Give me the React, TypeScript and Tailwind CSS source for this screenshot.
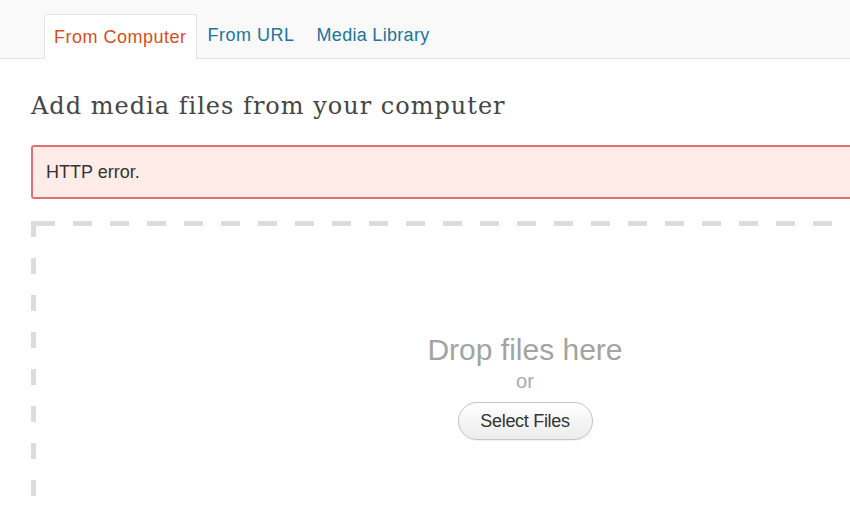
export default function App() {
  return (
    <div className="relative h-[508px] w-[850px] overflow-hidden bg-white font-['Liberation_Sans',Arial,sans-serif]">
      <TabBar />
      <div className="w-[1019px] pl-[31px]">
        <h1 className="mt-[32px] font-['DejaVu_Serif',Georgia,serif] text-[24px] leading-[30px] tracking-[1px] text-[#464646]">
          Add media files from your computer
        </h1>
        <div className="mt-[24px] flex h-[54px] items-center rounded-[3px] border-2 border-[#e07272] bg-[#ffebe8] px-[13px] text-[18px] text-[#333]">
          HTTP error.
        </div>
        <DropZone />
      </div>
    </div>
  )
}

function TabBar() {
  return (
    <div className="flex h-[59px] items-end border-b border-[#e3e3e3] bg-[#f9f9f9] pl-[44px]">
      <div className="-mb-px flex h-[45px] items-center rounded-t-[3px] border border-b-0 border-[#e3e3e3] bg-white px-[9px] text-[18px] tracking-[0.5px] text-[#d54e21]">
        From Computer
      </div>
      <div className="flex h-[45px] items-center px-[11px] text-[18px] tracking-[0.5px] text-[#21759b]">From URL</div>
      <div className="flex h-[45px] items-center px-[11px] text-[18px] tracking-[0.3px] text-[#21759b]">Media Library</div>
    </div>
  )
}

function DropZone() {
  return (
    <div className="mt-[22px] flex h-[300px] flex-col items-center pt-[112px] [background-image:linear-gradient(to_right,#dcdcdc_19px,transparent_19px),linear-gradient(to_bottom,#dcdcdc_16px,transparent_16px),linear-gradient(to_right,#dcdcdc_24px,transparent_24px)] [background-position:5px_0,0_0,0_0] [background-repeat:repeat-x,repeat-y,no-repeat] [background-size:37px_5px,5px_37px,24px_5px]">
      <div className="text-[30px] leading-[34px] text-[#a3a3a3]">Drop files here</div>
      <div className="mt-[2px] text-[20px] leading-[24px] text-[#aaa]">or</div>
      <button className="mt-[9px] h-[38px] w-[135px] rounded-full border border-[#c4c4c4] bg-gradient-to-b from-white to-[#ececec] text-[18px] tracking-[-0.3px] text-[#333] shadow-[0_1px_0_rgba(0,0,0,0.05)]">
        Select Files
      </button>
    </div>
  )
}
